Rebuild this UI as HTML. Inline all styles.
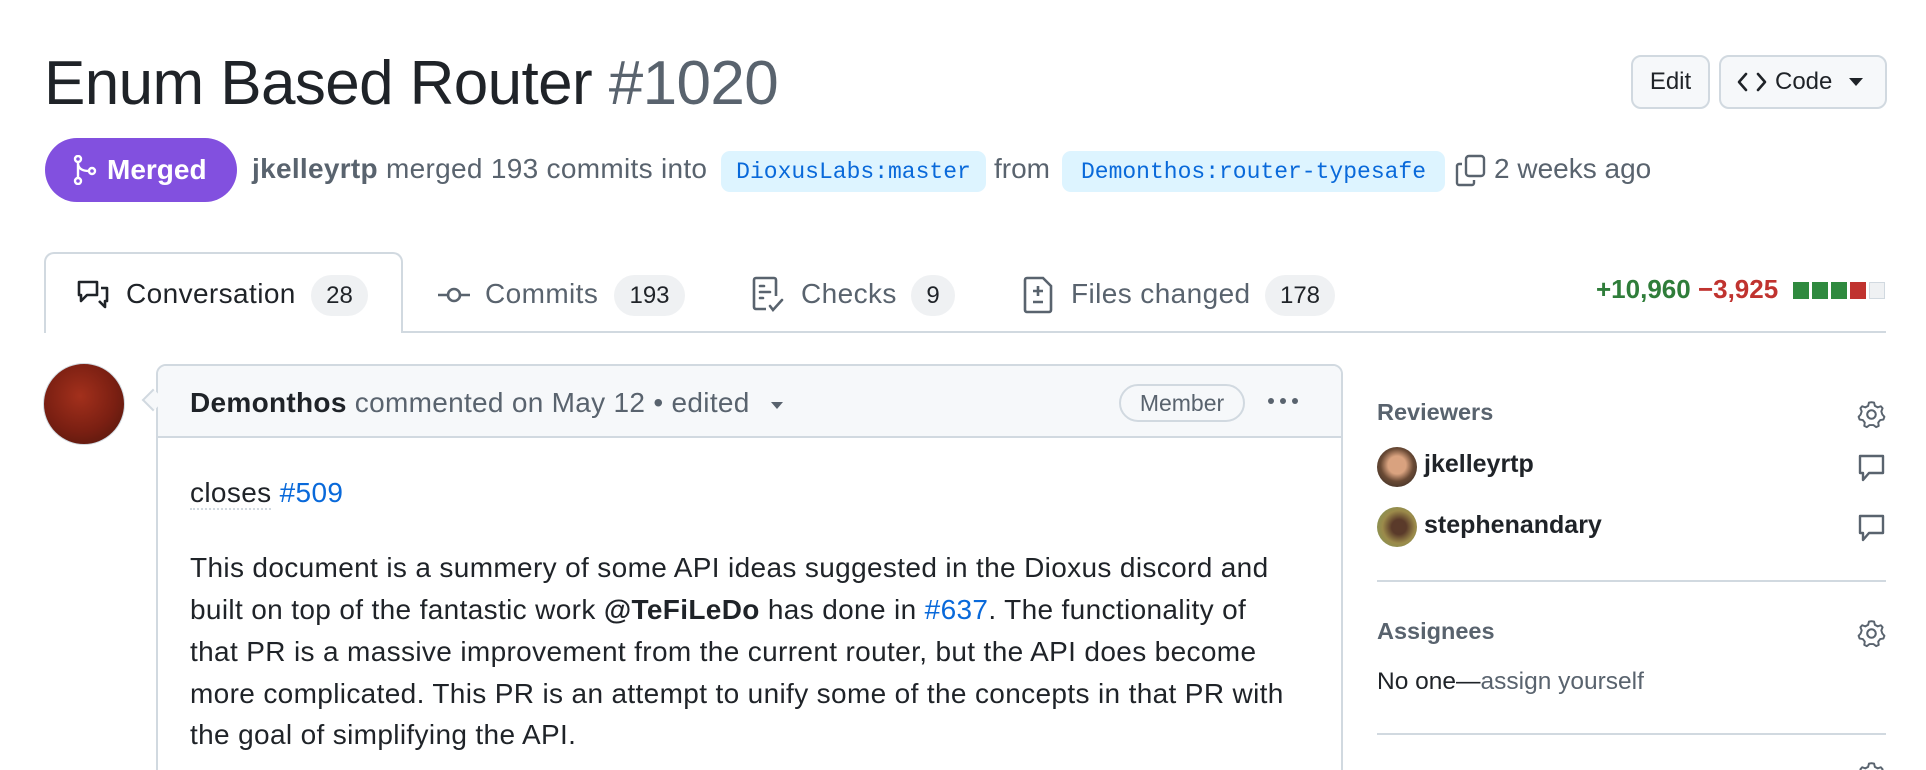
<!DOCTYPE html>
<html style="width:1926px;height:770px;overflow:hidden"><head><meta charset="utf-8"><style>
*{margin:0;padding:0;box-sizing:border-box}
body{width:1926px;height:770px;background:#fff;font-family:"Liberation Sans",Arial,sans-serif;color:#1f2328;position:relative;overflow:hidden}
#w{position:absolute;left:0;top:0;width:1926px;height:770px;overflow:hidden}
.a{position:absolute;white-space:nowrap}
.btn{position:absolute;background:#f6f8fa;border:2px solid #d1d9e0;border-radius:10px;font-size:24px;font-weight:500;display:flex;align-items:center;justify-content:center;color:#1f2328}
.br{position:absolute;background:#ddf4ff;color:#0969da;border-radius:9px;font-family:"Liberation Mono",monospace;font-size:23px;display:flex;align-items:center;justify-content:center}
.cnt{position:absolute;background:#eff1f3;border-radius:22px;font-size:24px;display:flex;align-items:center;justify-content:center;color:#1f2328;height:41px;top:275px}
.tab{position:absolute;font-size:28px;letter-spacing:0.4px;color:#59636e;top:278px}
.p{position:absolute;left:190px;font-size:28px;letter-spacing:0.35px;white-space:nowrap;color:#1f2328}
a{color:#0969da;text-decoration:none}
.sh{position:absolute;left:1377px;font-size:23.5px;font-weight:bold;color:#59636e}
</style></head><body><div id="w">

<div class="a" style="left:44px;top:48px;font-size:62px;letter-spacing:-0.6px">Enum Based Router <span style="color:#59636e">#1020</span></div>

<div class="btn" style="left:1631px;top:55px;width:79px;height:54px">Edit</div>
<div class="btn" style="left:1719px;top:55px;width:168px;height:54px;justify-content:flex-start;padding-left:16px">
<svg width="30" height="24" viewBox="0 0 30 24" style="margin-right:8px"><path d="M9 4 L2 12 L9 20 M21 4 L28 12 L21 20" fill="none" stroke="#1f2328" stroke-width="2.6" stroke-linecap="round" stroke-linejoin="round"/></svg>Code
<svg width="16" height="12" viewBox="0 0 16 12" style="margin-left:16px"><path d="M1 2 L15 2 L8 10 Z" fill="#1f2328"/></svg></div>

<div class="a" style="left:45px;top:138px;width:192px;height:64px;background:#8250df;border-radius:32px;color:#fff;font-size:28px;font-weight:bold;display:flex;align-items:center;padding-left:28px">
<svg width="24" height="30" viewBox="0 0 24 30" style="margin-right:10px"><circle cx="5" cy="4" r="3" fill="none" stroke="#fff" stroke-width="2.4"/><circle cx="5" cy="26" r="3" fill="none" stroke="#fff" stroke-width="2.4"/><circle cx="19" cy="16" r="3" fill="none" stroke="#fff" stroke-width="2.4"/><path d="M5 7 V23 M5 9 Q6 16 16 16" fill="none" stroke="#fff" stroke-width="2.4"/></svg>Merged</div>

<div class="a" style="left:252px;top:153px;font-size:28px;letter-spacing:0.3px;color:#59636e"><b>jkelleyrtp</b> merged 193 commits into</div>
<div class="br" style="left:721px;top:151px;width:265px;height:41px">DioxusLabs:master</div>
<div class="a" style="left:994px;top:153px;font-size:28px;color:#59636e">from</div>
<div class="br" style="left:1062px;top:151px;width:383px;height:41px">Demonthos:router-typesafe</div>
<svg class="a" style="left:1455px;top:154px" width="32" height="34" viewBox="0 0 32 34"><rect x="11" y="2" width="18" height="20" rx="3" fill="none" stroke="#59636e" stroke-width="2.4"/><path d="M7 10 H4 a2 2 0 0 0 -2 2 V29 a2 2 0 0 0 2 2 H17 a2 2 0 0 0 2 -2 V26" fill="none" stroke="#59636e" stroke-width="2.4"/></svg>
<div class="a" style="left:1494px;top:153px;font-size:28px;color:#59636e">2 weeks ago</div>

<div class="a" style="left:44px;top:331px;width:1842px;height:2px;background:#d1d9e0"></div>
<div class="a" style="left:44px;top:252px;width:359px;height:81px;border:2px solid #d1d9e0;border-bottom:none;border-radius:10px 10px 0 0;background:#fff"></div>
<svg class="a" style="left:76px;top:278px" width="34" height="34" viewBox="0 0 34 34"><path d="M3 4 H21 V17 H11 L5 23 V17 H3 Z" fill="none" stroke="#1f2328" stroke-width="2.6" stroke-linejoin="round"/><path d="M25 10 H31 V23 H29 V29 L23 23" fill="none" stroke="#1f2328" stroke-width="2.6" stroke-linejoin="round"/></svg>
<div class="tab" style="left:126px;color:#1f2328">Conversation</div>
<div class="cnt" style="left:311px;width:57px">28</div>
<svg class="a" style="left:437px;top:283px" width="34" height="24" viewBox="0 0 34 24"><circle cx="17" cy="12" r="6" fill="none" stroke="#59636e" stroke-width="2.6"/><path d="M1 12 H11 M23 12 H33" stroke="#59636e" stroke-width="2.6"/></svg>
<div class="tab" style="left:485px">Commits</div>
<div class="cnt" style="left:614px;width:71px">193</div>
<svg class="a" style="left:752px;top:276px" width="34" height="38" viewBox="0 0 34 38"><path d="M14 33 H4 a2 2 0 0 1 -2 -2 V4 a2 2 0 0 1 2 -2 H22 a2 2 0 0 1 2 2 V20" fill="none" stroke="#59636e" stroke-width="2.6"/><path d="M8 10 H12 M8 16 H18 M8 22 H11 M18 30 L21 34 L30 24" fill="none" stroke="#59636e" stroke-width="2.6" stroke-linecap="round"/></svg>
<div class="tab" style="left:801px">Checks</div>
<div class="cnt" style="left:911px;width:44px">9</div>
<svg class="a" style="left:1023px;top:276px" width="30" height="38" viewBox="0 0 30 38"><path d="M4 2 H20 L28 10 V34 a2 2 0 0 1 -2 2 H4 a2 2 0 0 1 -2 -2 V4 a2 2 0 0 1 2 -2 Z" fill="none" stroke="#59636e" stroke-width="2.6"/><path d="M15 10 V20 M10 15 H20 M10 26 H20" stroke="#59636e" stroke-width="2.6"/></svg>
<div class="tab" style="left:1071px">Files changed</div>
<div class="cnt" style="left:1265px;width:70px">178</div>

<div class="a" style="left:1596px;top:274px;font-size:26px;font-weight:bold;color:#2f7d3a">+10,960 <span style="color:#c0332f">−3,925</span></div>
<div class="a" style="left:1793px;top:282px;display:flex;gap:3px">
<div style="width:16px;height:17px;background:#2f8a3f"></div><div style="width:16px;height:17px;background:#2f8a3f"></div><div style="width:16px;height:17px;background:#2f8a3f"></div><div style="width:16px;height:17px;background:#c0332f"></div><div style="width:16px;height:17px;background:#eff1f3;border:1px solid #d1d9e0"></div></div>

<div class="a" style="left:43px;top:363px;width:82px;height:82px;border-radius:50%;background:radial-gradient(circle at 45% 40%,#a3301c,#7a1f12 55%,#4a160c);border:1px solid #d1d9e0"></div>
<div class="a" style="left:156px;top:364px;width:1187px;height:430px;border:2px solid #d1d9e0;border-radius:10px;background:#fff"></div>
<div class="a" style="left:158px;top:366px;width:1183px;height:72px;background:#f6f8fa;border-bottom:2px solid #d1d9e0;border-radius:8px 8px 0 0"></div>
<div class="a" style="left:145px;top:392px;width:16px;height:16px;background:#f6f8fa;border-left:2px solid #d1d9e0;border-bottom:2px solid #d1d9e0;transform:rotate(45deg)"></div>
<div class="a" style="left:190px;top:387px;font-size:28px;letter-spacing:0.3px;color:#59636e"><b style="color:#1f2328">Demonthos</b> commented on May 12 • edited</div>
<svg class="a" style="left:770px;top:400px" width="14" height="10" viewBox="0 0 14 10"><path d="M1 2 L13 2 L7 9 Z" fill="#59636e"/></svg>
<div class="a" style="left:1119px;top:384px;width:126px;height:38px;border:2px solid #d1d9e0;border-radius:20px;font-size:23px;color:#59636e;display:flex;align-items:center;justify-content:center">Member</div>
<div class="a" style="left:1268px;top:398px;display:flex;gap:6px"><i style="width:6px;height:6px;border-radius:3px;background:#59636e"></i><i style="width:6px;height:6px;border-radius:3px;background:#59636e"></i><i style="width:6px;height:6px;border-radius:3px;background:#59636e"></i></div>

<div class="p" style="top:477px"><span style="border-bottom:2px dotted #d1d9e0">closes</span> <a>#509</a></div>
<div class="p" style="top:552px">This document is a summery of some API ideas suggested in the Dioxus discord and</div>
<div class="p" style="top:594px">built on top of the fantastic work <b>@TeFiLeDo</b> has done in <a>#637</a>. The functionality of</div>
<div class="p" style="top:636px">that PR is a massive improvement from the current router, but the API does become</div>
<div class="p" style="top:678px">more complicated. This PR is an attempt to unify some of the concepts in that PR with</div>
<div class="p" style="top:719px">the goal of simplifying the API.</div>

<div class="sh" style="top:399px">Reviewers</div>
<svg class="a" style="left:1856px;top:399px" width="31" height="31" viewBox="0 0 24 24"><path d="M12 2.5 L14 2.8 L14.6 5.3 L16.8 6.5 L19.2 5.6 L20.6 7.2 L19.6 9.6 L20.4 12 L22 13.8 L21.2 15.9 L18.7 16.3 L17.2 18.3 L17.6 20.8 L15.6 21.8 L13.6 20.2 L10.4 20.2 L8.4 21.8 L6.4 20.8 L6.8 18.3 L5.3 16.3 L2.8 15.9 L2 13.8 L3.6 12 L4.4 9.6 L3.4 7.2 L4.8 5.6 L7.2 6.5 L9.4 5.3 L10 2.8 Z" fill="none" stroke="#59636e" stroke-width="1.5" stroke-linejoin="round"/><circle cx="12" cy="12" r="3.3" fill="none" stroke="#59636e" stroke-width="1.6"/></svg>
<div class="a" style="left:1377px;top:447px;width:40px;height:40px;border-radius:50%;background:radial-gradient(circle at 50% 45%,#d9a27f 0 30%,#6a4a35 55%,#2a2420)"></div>
<div class="a" style="left:1424px;top:450px;font-size:25px;font-weight:bold">jkelleyrtp</div>
<svg class="a" style="left:1857px;top:453px" width="29" height="32" viewBox="0 0 29 32"><path d="M3 3 H26 V20 H12 L6 27 V20 H3 Z" fill="none" stroke="#59636e" stroke-width="2.4" stroke-linejoin="round"/></svg>
<div class="a" style="left:1377px;top:507px;width:40px;height:40px;border-radius:50%;background:radial-gradient(circle at 55% 50%,#5a3a2a 0 25%,#9b8a4a 55%,#7a9a5a)"></div>
<div class="a" style="left:1424px;top:511px;font-size:25px;font-weight:bold">stephenandary</div>
<svg class="a" style="left:1857px;top:513px" width="29" height="32" viewBox="0 0 29 32"><path d="M3 3 H26 V20 H12 L6 27 V20 H3 Z" fill="none" stroke="#59636e" stroke-width="2.4" stroke-linejoin="round"/></svg>
<div class="a" style="left:1377px;top:580px;width:509px;height:2px;background:#d1d9e0"></div>
<div class="sh" style="top:618px">Assignees</div>
<svg class="a" style="left:1856px;top:618px" width="31" height="31" viewBox="0 0 24 24"><path d="M12 2.5 L14 2.8 L14.6 5.3 L16.8 6.5 L19.2 5.6 L20.6 7.2 L19.6 9.6 L20.4 12 L22 13.8 L21.2 15.9 L18.7 16.3 L17.2 18.3 L17.6 20.8 L15.6 21.8 L13.6 20.2 L10.4 20.2 L8.4 21.8 L6.4 20.8 L6.8 18.3 L5.3 16.3 L2.8 15.9 L2 13.8 L3.6 12 L4.4 9.6 L3.4 7.2 L4.8 5.6 L7.2 6.5 L9.4 5.3 L10 2.8 Z" fill="none" stroke="#59636e" stroke-width="1.5" stroke-linejoin="round"/><circle cx="12" cy="12" r="3.3" fill="none" stroke="#59636e" stroke-width="1.6"/></svg>
<div class="a" style="left:1377px;top:668px;font-size:24.5px">No one—<span style="color:#59636e">assign yourself</span></div>
<div class="a" style="left:1377px;top:733px;width:509px;height:2px;background:#d1d9e0"></div>
<svg class="a" style="left:1856px;top:760px" width="31" height="31" viewBox="0 0 24 24"><path d="M12 2.5 L14 2.8 L14.6 5.3 L16.8 6.5 L19.2 5.6 L20.6 7.2 L19.6 9.6 L20.4 12 L22 13.8 L21.2 15.9 L18.7 16.3 L17.2 18.3 L17.6 20.8 L15.6 21.8 L13.6 20.2 L10.4 20.2 L8.4 21.8 L6.4 20.8 L6.8 18.3 L5.3 16.3 L2.8 15.9 L2 13.8 L3.6 12 L4.4 9.6 L3.4 7.2 L4.8 5.6 L7.2 6.5 L9.4 5.3 L10 2.8 Z" fill="none" stroke="#59636e" stroke-width="1.5" stroke-linejoin="round"/></svg>
</div></body></html>
